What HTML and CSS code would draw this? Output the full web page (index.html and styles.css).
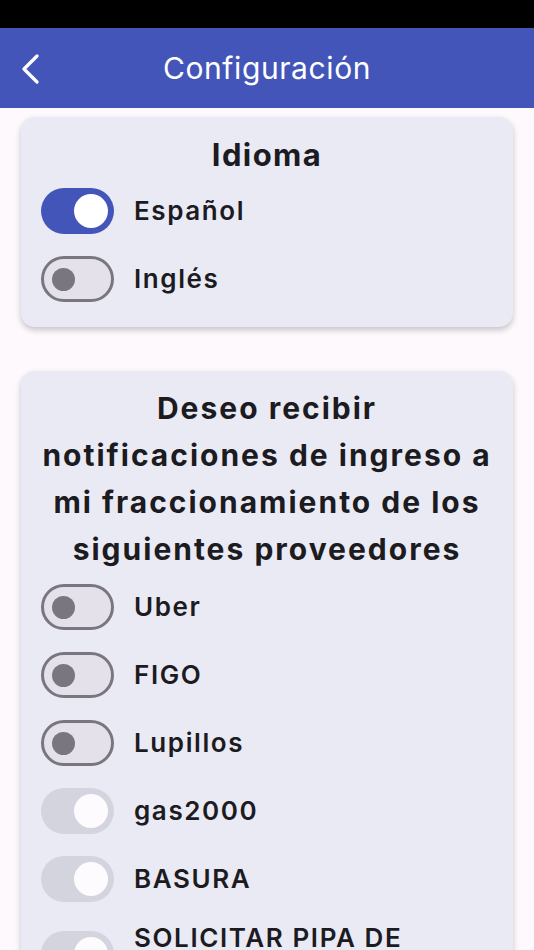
FILE: index.html
```html
<!DOCTYPE html>
<html lang="es">
<head>
  <meta charset="UTF-8" />
  <meta name="viewport" content="width=device-width, initial-scale=1.0"/>
  <title>Configuración</title>
  <link rel="stylesheet" href="styles.css">
</head>
<body>
  <div class="status-bar"></div>

  <header class="app-bar">
    <button class="back" aria-label="Regresar">
      <svg width="20" height="30" viewBox="0 0 20 30">
        <polyline points="16,2 3,15 16,28" fill="none" stroke="#fff" stroke-width="3.2" stroke-linecap="round" stroke-linejoin="round"/>
      </svg>
    </button>
    <h1>Configuración</h1>
  </header>

  <main class="content">
    <section class="card">
      <h2>Idioma</h2>
      <div class="row">
        <span class="switch on"><span class="thumb"></span></span>
        <span class="label">Español</span>
      </div>
      <div class="row">
        <span class="switch"><span class="thumb"></span></span>
        <span class="label">Inglés</span>
      </div>
    </section>

    <section class="card providers">
      <h2>Deseo recibir<br>notificaciones de ingreso a<br>mi fraccionamiento de los<br>siguientes proveedores</h2>
      <div class="row">
        <span class="switch"><span class="thumb"></span></span>
        <span class="label">Uber</span>
      </div>
      <div class="row">
        <span class="switch"><span class="thumb"></span></span>
        <span class="label">FIGO</span>
      </div>
      <div class="row">
        <span class="switch"><span class="thumb"></span></span>
        <span class="label">Lupillos</span>
      </div>
      <div class="row">
        <span class="switch disabled"><span class="thumb"></span></span>
        <span class="label">gas2000</span>
      </div>
      <div class="row">
        <span class="switch disabled"><span class="thumb"></span></span>
        <span class="label">BASURA</span>
      </div>
      <div class="row">
        <span class="switch disabled"><span class="thumb"></span></span>
        <span class="label">SOLICITAR PIPA DE AGUA</span>
      </div>
    </section>
  </main>
</body>
</html>
```

FILE: styles.css
```css
:root {
  --primary: #4355b9;
  --bg: #fdf9fd;
  --card: #eaeaf5;
  --text: #1c1b1f;
  --outline: #79767f;
  --track-off: #e4e1ea;
  --track-disabled: #d4d4df;
}

* {
  box-sizing: border-box;
}

body {
  margin: 0;
  background: var(--bg);
  color: var(--text);
  font-family: Inter, "Noto Sans", sans-serif;
}

.status-bar {
  height: 28px;
  background: #000;
}

.app-bar {
  position: relative;
  height: 80px;
  background: var(--primary);
  display: flex;
  align-items: center;
  justify-content: center;
}

.app-bar h1 {
  margin: 0;
  color: #fff;
  font-size: 30px;
  font-weight: 400;
  letter-spacing: 0.6px;
}

.back {
  position: absolute;
  left: 21px;
  top: 26px;
  padding: 0;
  border: none;
  background: none;
  display: flex;
}

.content {
  padding: 9px 21px 0 21px;
  display: flex;
  flex-direction: column;
  gap: 44px;
}

.card {
  background: var(--card);
  border-radius: 14px;
  padding: 16px 20px 14px 20px;
  box-shadow: 0 3px 6px rgba(0, 0, 0, 0.22);
}

.card h2 {
  margin: 0;
  text-align: center;
  font-size: 31px;
  line-height: 44px;
  font-weight: 700;
  letter-spacing: 1.4px;
}

.providers {
  padding-top: 14px;
}

.providers h2 {
  line-height: 47px;
  font-size: 30px;
  letter-spacing: 2px;
  margin: 0 -20px;
}

.row {
  display: flex;
  align-items: center;
  gap: 20px;
  min-height: 68px;
  padding: 9px 0;
}

.label {
  padding-right: 16px;
  font-size: 26px;
  line-height: 32px;
  font-weight: 600;
  letter-spacing: 1.6px;
}

.switch {
  flex: none;
  width: 73px;
  height: 46px;
  border-radius: 23px;
  border: 3px solid var(--outline);
  background: var(--track-off);
  display: flex;
  align-items: center;
  padding: 0 8px;
}

.switch .thumb {
  width: 23px;
  height: 23px;
  border-radius: 50%;
  background: var(--outline);
}

.switch.on,
.switch.disabled {
  border: none;
  justify-content: flex-end;
  padding: 0 6px;
}

.switch.on {
  background: var(--primary);
}

.switch.disabled {
  background: var(--track-disabled);
}

.switch.on .thumb,
.switch.disabled .thumb {
  width: 34px;
  height: 34px;
  background: #fff;
}

.switch.disabled .thumb {
  background: #fdfbfe;
}
```
